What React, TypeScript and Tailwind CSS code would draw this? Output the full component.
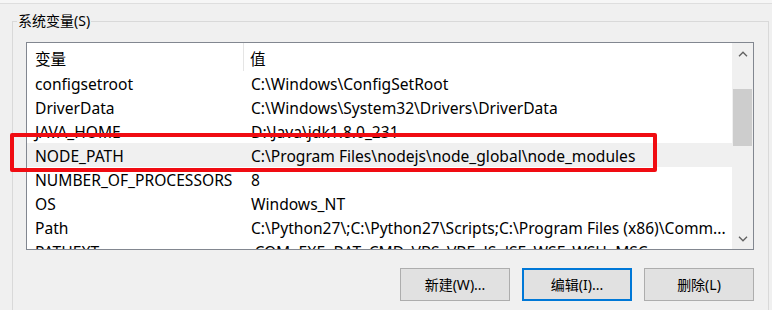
import React from 'react';

interface EnvVar {
  name: string;
  value: string;
}

const vars: EnvVar[] = [
  { name: 'configsetroot', value: String.raw`C:\Windows\ConfigSetRoot` },
  { name: 'DriverData', value: String.raw`C:\Windows\System32\Drivers\DriverData` },
  { name: 'JAVA_HOME', value: String.raw`D:\Java\jdk1.8.0_231` },
  { name: 'NODE_PATH', value: String.raw`C:\Program Files\nodejs\node_global\node_modules` },
  { name: 'NUMBER_OF_PROCESSORS', value: '8' },
  { name: 'OS', value: 'Windows_NT' },
  { name: 'Path', value: String.raw`C:\Python27\;C:\Python27\Scripts;C:\Program Files (x86)\Comm...` },
  { name: 'PATHEXT', value: '.COM;.EXE;.BAT;.CMD;.VBS;.VBE;.JS;.JSE;.WSF;.WSH;.MSC' },
];

const Chevron = ({ up }: { up?: boolean }) => (
  <svg width="10" height="6" viewBox="0 0 10 6" className="block">
    <path
      d={up ? 'M1 5.2 L5 1.2 L9 5.2' : 'M1 0.8 L5 4.8 L9 0.8'}
      fill="none"
      stroke="#606060"
      strokeWidth="1.3"
    />
  </svg>
);

const Button = ({ label, focused }: { label: string; focused?: boolean }) => (
  <button
    className={
      focused
        ? 'w-[110px] h-[33px] bg-[#e1e1e1] border-2 border-[#0078d7] text-[14px] text-black'
        : 'w-[110px] h-[33px] bg-[#e1e1e1] border border-[#adadad] text-[14px] text-black'
    }
  >
    {label}
  </button>
);

const App = () => {
  return (
    <div className="relative w-[772px] h-[310px] overflow-hidden bg-[#f0f0f0] font-[Noto_Sans,Noto_Sans_CJK_SC,sans-serif] text-black">
      {/* top strip */}
      <div className="h-[4px] bg-[#f6f6f6] border-b border-[#dedede]" />

      <fieldset className="mt-[7px] ml-[12px] mr-[3px] border border-[#d9d9d9] p-0 m-0 min-w-0">
        <legend className="ml-[4px] px-[1px] text-[14px] leading-[20px]">系统变量(S)</legend>

        {/* list view */}
        <div className="mt-[11px] ml-[13px] mr-[14px] h-[208px] border border-[#828790] bg-white flex overflow-hidden">
          <div className="flex-1 flex flex-col text-[15.6px] leading-[20px]">
            <div className="h-[28px] flex items-center shrink-0">
              <div className="w-[217px] h-full pl-[8px] pt-[4px] flex items-center border-r border-[#e5e5e5]">变量</div>
              <div className="pl-[6px] pt-[4px]">值</div>
            </div>
            {vars.map((v) => (
              <div
                key={v.name}
                className={
                  v.name === 'NODE_PATH'
                    ? 'h-[24px] shrink-0 flex items-center pt-[2px] bg-[#f0f0f0]'
                    : 'h-[24px] shrink-0 flex items-center pt-[2px]'
                }
              >
                <div className="w-[217px] pl-[8px] whitespace-nowrap">{v.name}</div>
                <div className="pl-[7px] whitespace-nowrap">{v.value}</div>
              </div>
            ))}
          </div>

          {/* scrollbar */}
          <div className="w-[21px] shrink-0 bg-[#f0f0f0] flex flex-col">
            <div className="h-[21px] flex items-center justify-center">
              <Chevron up />
            </div>
            <div className="h-[25px]" />
            <div className="h-[57px] mx-[1px] bg-[#cdcdcd]" />
            <div className="flex-1" />
            <div className="h-[21px] flex items-center justify-center">
              <Chevron />
            </div>
          </div>
        </div>

        {/* buttons */}
        <div className="mt-[18px] mr-[14px] flex justify-end gap-[12px] pb-[20px]">
          <Button label="新建(W)..." />
          <Button label="编辑(I)..." focused />
          <Button label="删除(L)" />
        </div>
      </fieldset>

      {/* red annotation box */}
      <div className="absolute left-[10px] top-[133px] w-[647px] h-[39px] border-[4px] border-[#f00c12] rounded-[2px]" />
    </div>
  );
};

export default App;
